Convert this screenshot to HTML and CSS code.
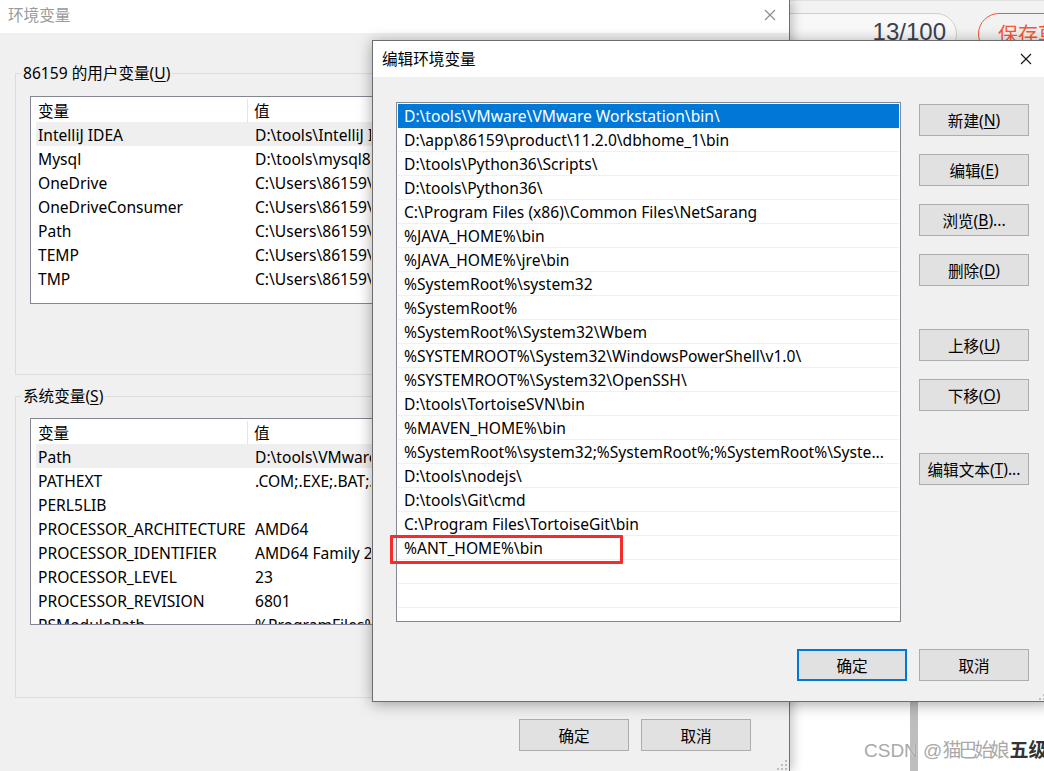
FILE: index.html
```html
<!DOCTYPE html>
<html lang="zh-CN">
<head>
<meta charset="utf-8">
<title>环境变量</title>
<link rel="stylesheet" href="styles.css">
</head>
<body>
<div class="screen">

  <div class="browser">
    <div class="toolbar">
      <div class="counter">13/100</div>
      <div class="save-btn">保存草稿</div>
    </div>
    <div class="page">
      <div class="page-main"></div>
      <div class="scrollbar"></div>
      <div class="page-side"></div>
    </div>
  </div>

  <div class="win env">
    <div class="titlebar inactive">
      <span class="title">环境变量</span>
      <svg class="close" width="12" height="12" viewBox="0 0 12 12"><path d="M1 1 L11 11 M11 1 L1 11" stroke="#8a8a8a" stroke-width="1.1" fill="none"/></svg>
    </div>
    <div class="env-body">
      <fieldset class="group group-user">
        <legend>86159 的用户变量(<u>U</u>)</legend>
        <div class="listview lv-user">
          <div class="lv-head"><span class="h1">变量</span><span class="h2">值</span></div>
          <div class="lv-rows">
            <div class="lv-row sel"><span class="c1">IntelliJ IDEA</span><span class="c2">D:\tools\IntelliJ IDEA</span></div>
            <div class="lv-row"><span class="c1">Mysql</span><span class="c2">D:\tools\mysql8\bin</span></div>
            <div class="lv-row"><span class="c1">OneDrive</span><span class="c2">C:\Users\86159\OneDrive</span></div>
            <div class="lv-row"><span class="c1">OneDriveConsumer</span><span class="c2">C:\Users\86159\OneDrive</span></div>
            <div class="lv-row"><span class="c1">Path</span><span class="c2">C:\Users\86159\AppData</span></div>
            <div class="lv-row"><span class="c1">TEMP</span><span class="c2">C:\Users\86159\AppData</span></div>
            <div class="lv-row"><span class="c1">TMP</span><span class="c2">C:\Users\86159\AppData</span></div>
          </div>
        </div>
      </fieldset>

      <fieldset class="group group-sys">
        <legend>系统变量(<u>S</u>)</legend>
        <div class="listview lv-sys">
          <div class="lv-head"><span class="h1">变量</span><span class="h2">值</span></div>
          <div class="lv-rows">
            <div class="lv-row sel"><span class="c1">Path</span><span class="c2">D:\tools\VMware\VMware</span></div>
            <div class="lv-row"><span class="c1">PATHEXT</span><span class="c2">.COM;.EXE;.BAT;.CMD</span></div>
            <div class="lv-row"><span class="c1">PERL5LIB</span><span class="c2"></span></div>
            <div class="lv-row"><span class="c1">PROCESSOR_ARCHITECTURE</span><span class="c2">AMD64</span></div>
            <div class="lv-row"><span class="c1">PROCESSOR_IDENTIFIER</span><span class="c2">AMD64 Family 23</span></div>
            <div class="lv-row"><span class="c1">PROCESSOR_LEVEL</span><span class="c2">23</span></div>
            <div class="lv-row"><span class="c1">PROCESSOR_REVISION</span><span class="c2">6801</span></div>
            <div class="lv-row"><span class="c1">PSModulePath</span><span class="c2">%ProgramFiles%\Windows</span></div>
          </div>
        </div>
      </fieldset>

      <div class="env-actions">
        <button class="btn">确定</button>
        <button class="btn">取消</button>
      </div>
    </div>
    <svg class="grip" width="10" height="10" viewBox="0 0 10 10"><g fill="#bcbcbc"><rect x="8" y="0" width="2" height="2"/><rect x="4" y="4" width="2" height="2"/><rect x="8" y="4" width="2" height="2"/><rect x="0" y="8" width="2" height="2"/><rect x="4" y="8" width="2" height="2"/><rect x="8" y="8" width="2" height="2"/></g></svg>
  </div>

  <div class="win edit">
    <div class="titlebar">
      <span class="title">编辑环境变量</span>
      <svg class="close" width="12" height="12" viewBox="0 0 12 12"><path d="M1 1 L11 11 M11 1 L1 11" stroke="#111" stroke-width="1.1" fill="none"/></svg>
    </div>
    <div class="edit-body">
      <div class="edit-main">
        <div class="pathlist">
          <div class="p-row sel">D:\tools\VMware\VMware Workstation\bin\</div>
          <div class="p-row">D:\app\86159\product\11.2.0\dbhome_1\bin</div>
          <div class="p-row">D:\tools\Python36\Scripts\</div>
          <div class="p-row">D:\tools\Python36\</div>
          <div class="p-row">C:\Program Files (x86)\Common Files\NetSarang</div>
          <div class="p-row">%JAVA_HOME%\bin</div>
          <div class="p-row">%JAVA_HOME%\jre\bin</div>
          <div class="p-row">%SystemRoot%\system32</div>
          <div class="p-row">%SystemRoot%</div>
          <div class="p-row">%SystemRoot%\System32\Wbem</div>
          <div class="p-row">%SYSTEMROOT%\System32\WindowsPowerShell\v1.0\</div>
          <div class="p-row">%SYSTEMROOT%\System32\OpenSSH\</div>
          <div class="p-row">D:\tools\TortoiseSVN\bin</div>
          <div class="p-row">%MAVEN_HOME%\bin</div>
          <div class="p-row">%SystemRoot%\system32;%SystemRoot%;%SystemRoot%\Syste...</div>
          <div class="p-row">D:\tools\nodejs\</div>
          <div class="p-row">D:\tools\Git\cmd</div>
          <div class="p-row">C:\Program Files\TortoiseGit\bin</div>
          <div class="p-row">%ANT_HOME%\bin</div>
          <div class="p-row"></div>
          <div class="p-row"></div>
          <div class="p-row"></div>
        </div>
        <div class="side-buttons">
          <button class="btn">新建(<u>N</u>)</button>
          <button class="btn">编辑(<u>E</u>)</button>
          <button class="btn">浏览(<u>B</u>)...</button>
          <button class="btn">删除(<u>D</u>)</button>
          <button class="btn gap-big">上移(<u>U</u>)</button>
          <button class="btn">下移(<u>O</u>)</button>
          <button class="btn gap-big2">编辑文本(<u>T</u>)...</button>
        </div>
      </div>
      <div class="edit-actions">
        <button class="btn default">确定</button>
        <button class="btn">取消</button>
      </div>
    </div>
    <svg class="grip" width="10" height="10" viewBox="0 0 10 10"><g fill="#bcbcbc"><rect x="8" y="0" width="2" height="2"/><rect x="4" y="4" width="2" height="2"/><rect x="8" y="4" width="2" height="2"/><rect x="0" y="8" width="2" height="2"/><rect x="4" y="8" width="2" height="2"/><rect x="8" y="8" width="2" height="2"/></g></svg>
  </div>

  <div class="annotation"></div>

  <div class="watermark">CSDN @<span class="wm-name">猫巴始娘</span><b>五级</b></div>
</div>
</body>
</html>
```

FILE: styles.css
```css
* { box-sizing: border-box; }
html, body { margin: 0; padding: 0; }
body {
  width: 1044px;
  height: 771px;
  overflow: hidden;
  background: #fff;
  font-family: "Noto Sans", "Noto Sans CJK SC", sans-serif;
  font-size: 15.6px;
  color: #000;
}
u { text-decoration-thickness: 1px; text-underline-offset: 2px; }

.screen { position: relative; width: 1044px; height: 771px; overflow: hidden; }

/* ---------- browser behind ---------- */
.browser {
  position: absolute; left: 700px; top: 0;
  width: 344px; height: 771px;
  background: #fff;
  display: flex; flex-direction: column;
}
.toolbar {
  height: 62px;
  background: #f2f2f2;
  border-top: 1px solid #e0e0e0;
  padding-top: 12px;
  display: flex; align-items: flex-start;
}
.counter {
  flex: none;
  width: 257px; height: 42px;
  border: 1px solid #cfcfcf; border-radius: 21px;
  background: #f8f8f8;
  font-family: "Liberation Sans", sans-serif;
  font-size: 24px; line-height: 24px;
  color: #3a4250;
  text-align: right;
  padding: 6px 10px 0 0;
}
.save-btn {
  flex: none;
  margin-left: 21px;
  height: 42px;
  border: 1px solid #fc5531; border-radius: 21px;
  color: #fc5531;
  font-family: "Noto Sans CJK SC", sans-serif;
  font-size: 20px; line-height: 20px;
  padding: 10px 18px 0 19px;
  white-space: nowrap;
}
.page { flex: 1; display: flex; }
.page-main { width: 210px; }
.scrollbar { width: 8px; background: #bdbdbd; }
.page-side { flex: 1; }

/* ---------- windows ---------- */
.win { position: absolute; background: #f0f0f0; display: flex; flex-direction: column; }
.titlebar {
  background: #fff;
  display: flex; align-items: center; justify-content: space-between;
  flex: none;
}
.titlebar.inactive .title { color: #9a9a9a; }
.close { display: block; }
.grip { position: absolute; right: 2px; bottom: 1px; }

.env {
  left: 0; top: 0; width: 790px; height: 771px;
  border-right: 1px solid #6f6f6f;
  box-shadow: 3px 0 10px rgba(0,0,0,0.22);
}
.env .titlebar { height: 33px; padding: 0 13px 4px 8px; }
.env .titlebar .title { margin-bottom: 1px; }

.env-body { padding: 0 14px 0 15px; display: flex; flex-direction: column; }

.group {
  margin: 0; padding: 0 14px 0 14px;
  border: 1px solid #dcdcdc;
  min-width: 0;
}
.group legend {
  margin-left: -9px;
  padding: 0 2px;
  line-height: 20px;
  height: 20px;
}
.group-user { margin-top: 30px; padding-top: 13px; padding-bottom: 70px; }
.group-sys { margin-top: 11px; padding-top: 12px; padding-bottom: 72px; }

.listview {
  background: #fff;
  border: 1px solid #828790;
  overflow: hidden;
}
.lv-user { height: 208px; }
.lv-sys { height: 207px; }
.lv-head { display: flex; height: 25px; align-items: center; padding-top: 1px; }
.lv-head .h1 {
  width: 217px; height: 23px; padding-left: 7px;
  border-right: 1px solid #e5e5e5;
  display: flex; align-items: center;
}
.lv-head .h2 { padding-left: 6px; }
.lv-rows { padding-left: 5px; }
.lv-row { display: flex; height: 24px; align-items: center; white-space: nowrap; padding-top: 1px; }
.lv-row.sel { background: #efefef; }
.lv-row .c1 { width: 212px; padding-left: 2px; flex: none; overflow: hidden; }
.lv-row .c2 { width: 123px; padding-left: 7px; flex: none; overflow: hidden; }

.env-actions {
  display: flex; justify-content: flex-end; gap: 12px;
  margin-top: 21px; padding-right: 24px;
}

/* ---------- buttons ---------- */
.btn {
  width: 110px; height: 32px;
  border: 1px solid #adadad;
  background: #e1e1e1;
  font: inherit; color: #000;
  padding: 0;
  display: flex; align-items: center; justify-content: center;
  white-space: nowrap;
  flex: none;
}
.btn.default { border: 2px solid #0078d7; }

/* ---------- edit dialog ---------- */
.edit {
  left: 372px; top: 40px; width: 680px; height: 662px;
  border: 1px solid #6d6d6d;
  box-shadow: 0 2px 14px rgba(0,0,0,0.35);
}
.edit .titlebar { height: 36px; padding: 0 19px 2px 9px; }
.edit .titlebar .close { margin-top: 2px; }
.edit-body { padding: 25px 0 0 23px; }
.edit-main { display: flex; gap: 18px; width: 633px; }
.pathlist {
  width: 505px; height: 520px;
  background: #fff;
  border: 1px solid #828790;
  padding: 1px;
  overflow: hidden;
}
.p-row {
  height: 24px;
  border-bottom: 1px solid #f0f0f0;
  padding: 1px 0 0 6px;
  line-height: 22px;
  white-space: nowrap; overflow: hidden;
}
.p-row.sel { background: #0078d7; color: #fff; border-bottom-color: #0078d7; }
.side-buttons { display: flex; flex-direction: column; gap: 18px; padding-top: 2px; }
.side-buttons .gap-big { margin-top: 25px; }
.side-buttons .gap-big2 { margin-top: 24px; }
.edit-actions {
  width: 633px;
  display: flex; justify-content: flex-end; gap: 12px;
  margin-top: 27px;
}

/* ---------- overlays ---------- */
.annotation {
  position: absolute; left: 390px; top: 535px;
  width: 233px; height: 29px;
  border: 3px solid #f62b2b;
  border-radius: 1px;
}
.watermark {
  position: absolute; left: 864px; top: 739px;
  font-family: "Liberation Sans", "Noto Sans CJK SC", sans-serif;
  font-size: 19px; line-height: 24px;
  color: #a9a9a9;
  white-space: nowrap;
  text-shadow: 0 0 1px #fff;
}
.watermark .wm-name { letter-spacing: -3px; }
.watermark b { color: #333; font-weight: 700; margin-left: 3px; }
```
